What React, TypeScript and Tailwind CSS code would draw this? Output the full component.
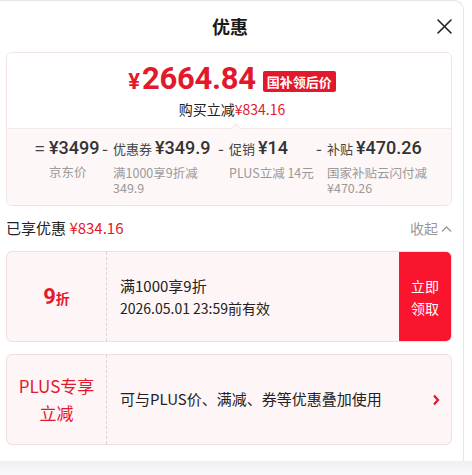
import React from "react";

const F = { fontFamily: '"Noto Sans CJK SC", "Noto Sans", sans-serif' };

function Col({ sign, label, amount, sub, w }: { sign: string; label?: string; amount: string; sub: string[]; w: string }) {
  return (
    <div className={`flex items-start ${w}`}>
      <span className={`text-[17px] leading-[26px] text-[#444] ${sign === "=" ? "w-[14px]" : "w-[11px]"}`}>{sign}</span>
      <div className="flex flex-col">
        <div className="flex items-baseline gap-[3px] leading-[26px] whitespace-nowrap">
          {label && <span className="text-[13px] text-[#444]">{label}</span>}
          <span className="text-[18px] font-medium text-[#333]" style={{ fontFamily: 'Roboto, "Noto Sans CJK SC", sans-serif' }}>{amount}</span>
        </div>
        <div className="flex flex-col mt-[3px]">
          {sub.map((s) => (
            <div key={s} className="text-[12.5px] leading-[15px] h-[15px] text-[#9a9a9a] whitespace-nowrap">{s}</div>
          ))}
        </div>
      </div>
    </div>
  );
}

export default function App() {
  return (
    <div className="w-[472px] h-[475px] bg-white overflow-hidden" style={F}>
      <div className="w-[464px] h-[461px] bg-white border-t border-r border-[#e6e6e6] rounded-tr-[10px] pl-[6px] pr-[11px] flex flex-col">
        {/* header */}
        <div className="relative h-[51px] flex items-center justify-center">
          <span className="text-[18px] font-bold text-[#1a1a1a] ml-[2px]">优惠</span>
          <svg className="absolute right-[0px] top-[18px]" width="15" height="15" viewBox="0 0 15 15">
            <path d="M1 1 L14 14 M14 1 L1 14" stroke="#222" strokeWidth="1.6" strokeLinecap="round" />
          </svg>
        </div>
        {/* summary card */}
        <div className="border border-[#f1e4e4] rounded-[6px] overflow-hidden">
          <div className="relative h-[75px] bg-white flex flex-col items-center pt-[9px]">
            <div className="h-[38px] flex items-center gap-[7px] ml-[6px]">
              <span className="text-[#e4182c] font-bold leading-[38px]" style={{ fontFamily: 'Roboto, Inter, sans-serif' }}>
                <span className="text-[22px] mr-[2px]">¥</span>
                <span className="text-[31px] tracking-[-0.3px]">2664.84</span>
              </span>
              <span className="bg-[#e4182c] text-white text-[13px] font-bold leading-[21px] px-[4px] rounded-[2px]">国补领后价</span>
            </div>
            <div className="h-[18px] text-[14px] leading-[18px] text-[#222] ml-[6px]">
              购买立减<span className="text-[#e4182c]">¥834.16</span>
            </div>
            <div className="absolute bottom-[-1px] left-[225px] w-[8px] h-[8px] border-l border-t border-[#f3e8e8] bg-[#fdf7f7] rotate-45 translate-y-[4px]" />
          </div>
          <div className="h-[77px] bg-[#fdf7f7] border-t border-[#f5eaea] flex pl-[28px] pt-[6px]">
            <Col w="w-[67px]" sign="=" amount="¥3499" sub={["京东价"]} />
            <Col w="w-[116px]" sign="-" label="优惠券" amount="¥349.9" sub={["满1000享9折减", "349.9"]} />
            <Col w="w-[98px]" sign="-" label="促销" amount="¥14" sub={["PLUS立减 14元"]} />
            <Col w="flex-1" sign="-" label="补贴" amount="¥470.26" sub={["国家补贴云闪付减", "¥470.26"]} />
          </div>
        </div>
        {/* enjoyed */}
        <div className="h-[45px] flex items-center justify-between">
          <span className="text-[15px] text-[#222]">已享优惠 <span className="text-[#e4182c]">¥834.16</span></span>
          <span className="text-[14px] text-[#999] flex items-center gap-[3px]">收起
            <svg width="11" height="8" viewBox="0 0 11 8"><path d="M1 6.5 L5.5 2 L10 6.5" fill="none" stroke="#999" strokeWidth="1.3" /></svg>
          </span>
        </div>
        {/* coupon 1 */}
        <div className="h-[91px] flex border border-[#f1dede] rounded-[6px] bg-[#fdf5f6] overflow-hidden">
          <div className="w-[100px] border-r border-dashed border-[#e6cfd2] flex items-center justify-center text-[#e4182c] font-bold">
            <span className="text-[22px]" style={{ fontFamily: 'Roboto, Inter, sans-serif' }}>9</span>
            <span className="text-[14px] mt-[4px]">折</span>
          </div>
          <div className="flex-1 flex flex-col justify-center pl-[13px] text-[#222]">
            <span className="text-[15px] leading-[22px]">满1000享9折</span>
            <span className="text-[14px] leading-[22px]">2026.05.01 23:59前有效</span>
          </div>
          <div className="w-[52px] bg-[#f8152d] text-white text-[14px] leading-[22px] flex items-center justify-center text-center">
            立即<br />领取
          </div>
        </div>
        {/* coupon 2 */}
        <div className="h-[91px] mt-[12px] flex border border-[#f1dede] rounded-[6px] bg-[#fdf5f6] overflow-hidden">
          <div className="w-[100px] border-r border-dashed border-[#e6cfd2] flex items-center justify-center text-center text-[#e4182c] text-[17px] leading-[27px] pb-[2px]">
            PLUS专享<br />立减
          </div>
          <div className="flex-1 flex items-center pl-[13px] text-[15px] text-[#222]">
            可与PLUS价、满减、券等优惠叠加使用
          </div>
          <div className="w-[30px] flex items-center justify-center">
            <svg width="8" height="12" viewBox="0 0 8 12"><path d="M2 1.5 L6 6 L2 10.5" fill="none" stroke="#e4182c" strokeWidth="2.2" /></svg>
          </div>
        </div>
      </div>
      <div className="h-[14px] w-[472px] bg-gradient-to-b from-[#f0f0f4] to-[#f8f8fa]" />
    </div>
  );
}
